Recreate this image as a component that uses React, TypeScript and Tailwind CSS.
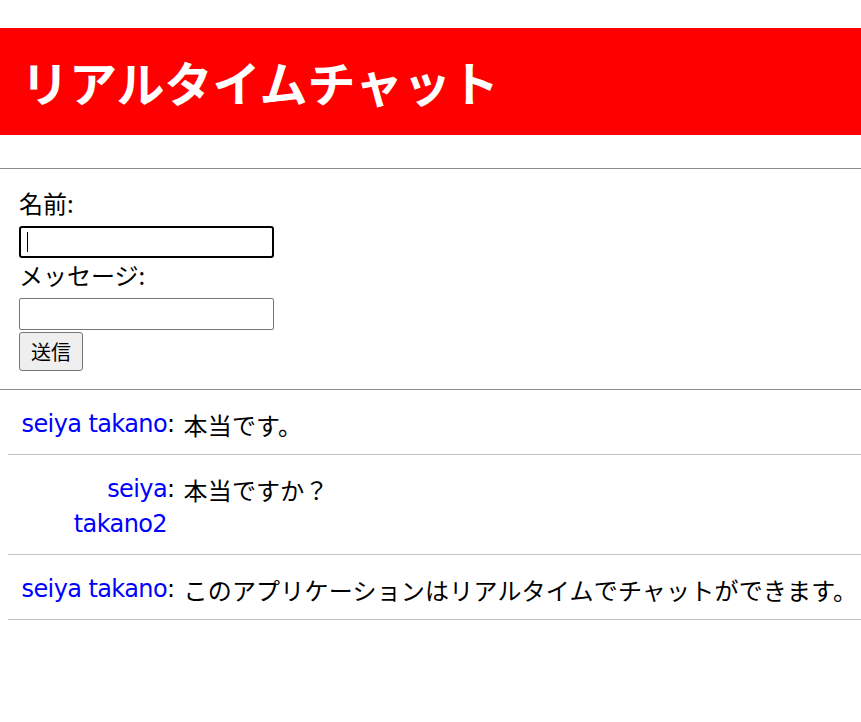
import React from "react";

const msgs = [
  { name: "seiya takano", text: "本当です。" },
  { name: "seiya takano2", text: "本当ですか？" },
  { name: "seiya takano", text: "このアプリケーションはリアルタイムでチャットができます。" },
];

export default function App() {
  return (
    <div className="min-h-[722px] bg-white text-black text-[24px] font-['DejaVu_Sans','Noto_Sans_CJK_JP',sans-serif]">
      <div className="h-[28px]" />
      <h1 className="h-[107px] bg-[#ff0000] text-white text-[48px] font-bold leading-[107px] pl-[21px] font-['Noto_Sans_CJK_JP',sans-serif]">
        リアルタイムチャット
      </h1>
      <div className="h-[33px]" />
      <div className="h-px bg-[#8a8a8a]" />
      <form className="pl-[19px] pt-[18px] pb-[18px] flex flex-col items-start" onSubmit={(e) => e.preventDefault()}>
        <label className="leading-[32px] font-['Noto_Sans_CJK_JP',sans-serif]">名前:</label>
        <div className="mt-[7px] w-[255px] h-[32px] border-2 border-black rounded-[3px] flex items-center pl-[6px]">
          <div className="w-px h-[20px] bg-black" />
        </div>
        <label className="mt-[1px] leading-[32px] font-['Noto_Sans_CJK_JP',sans-serif]">メッセージ:</label>
        <input
          type="text"
          className="mt-[7px] w-[255px] h-[32px] border border-[#767676] rounded-[2px] outline-none"
        />
        <button
          type="submit"
          className="mt-[2px] w-[64px] h-[39px] bg-[#efefef] border border-[#767676] rounded-[3px] text-[20px] leading-none font-['Noto_Sans_CJK_JP',sans-serif]"
        >
          送信
        </button>
      </form>
      <div className="h-px bg-[#8a8a8a]" />
      <ul className="pl-[8px]">
        {msgs.map((m, i) => (
          <li key={i} className="flex pt-[17px] pb-[12px] border-b border-[#c4c4c4] leading-[35px]">
            <span className="w-[159px] shrink-0 text-right text-[#0000ff] tracking-[-0.6px]">{m.name}</span>
            <span className="tracking-[-0.6px]">:&nbsp;</span>
            <span className="font-['Noto_Sans_CJK_JP',sans-serif] tracking-[0.2px] pl-[2px]">{m.text}</span>
          </li>
        ))}
      </ul>
    </div>
  );
}
